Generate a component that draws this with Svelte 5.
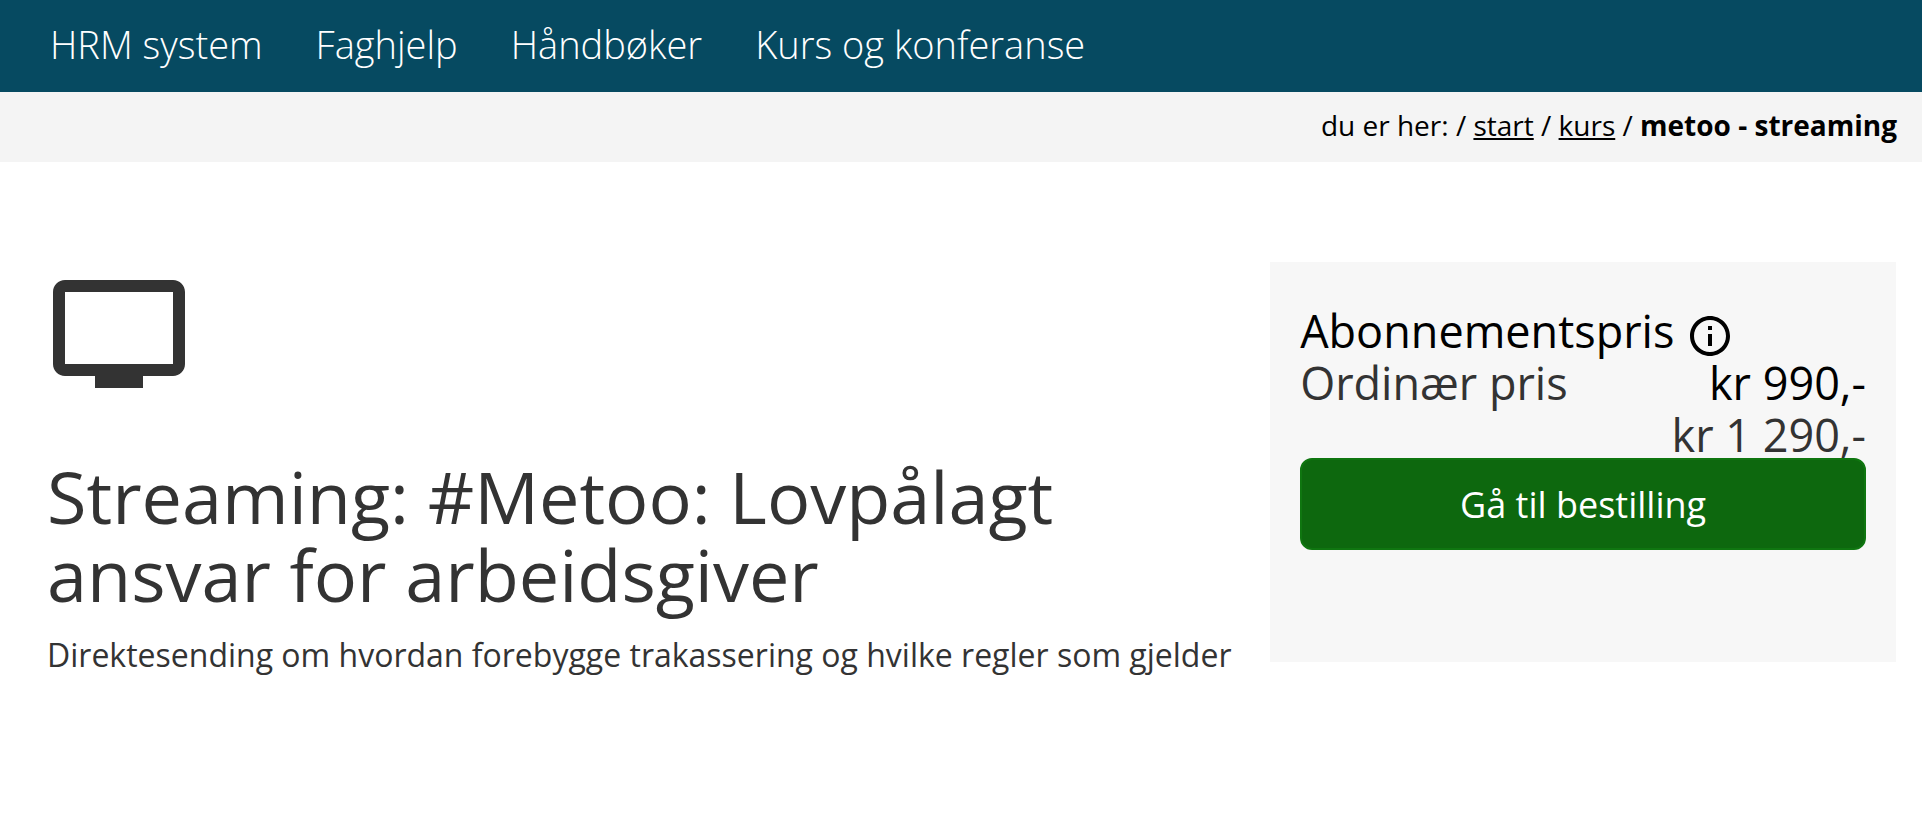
<script lang="ts">
	const menu = ['HRM system', 'Faghjelp', 'Håndbøker', 'Kurs og konferanse'];
	const crumbs = ['start', 'kurs'];
</script>

<header>
	<nav class="menu" aria-label="Hovedmeny">
		{#each menu as item}
			<a href="/">{item}</a>
		{/each}
	</nav>
</header>

<nav class="crumbs" aria-label="Brødsmuler">
	du er her: /
	{#each crumbs as crumb}
		<a href="/{crumb}">{crumb}</a> /{' '}
	{/each}
	<strong>metoo - streaming</strong>
</nav>

<main>
	<section>
		<svg class="tv" viewBox="0 0 24 24" aria-hidden="true">
			<path
				d="M21 3H3c-1.1 0-2 .9-2 2v12c0 1.1.9 2 2 2h5v2h8v-2h5c1.1 0 2-.9 2-2V5c0-1.1-.9-2-2-2zm0 14H3V5h18v12z"
			/>
		</svg>
		<h1>Streaming: #Metoo: Lovpålagt ansvar for arbeidsgiver</h1>
		<p>Direktesending om hvordan forebygge trakassering og hvilke regler som gjelder</p>
	</section>

	<aside>
		<dl>
			<dt class="member">
				Abonnementspris
				<svg viewBox="0 0 24 24" aria-hidden="true">
					<path
						d="M11 17h2v-6h-2v6zm1-15C6.48 2 2 6.48 2 12s4.48 10 10 10 10-4.48 10-10S17.52 2 12 2zm0 18c-4.41 0-8-3.59-8-8s3.59-8 8-8 8 3.59 8 8-3.59 8-8 8zM11 9h2V7h-2v2z"
					/>
				</svg>
			</dt>
			<dd class="member">kr 990,-</dd>
			<dt>Ordinær pris</dt>
			<dd>kr 1 290,-</dd>
		</dl>
		<button type="button">Gå til bestilling</button>
	</aside>
</main>

<style>
	:global(body) {
		background: #fff;
		color: #333;
		font-family: 'Open Sans', sans-serif;
	}

	header {
		padding: 17px 50px 21px;
		background: #064a61;
	}

	.menu {
		display: flex;
		flex-wrap: wrap;
		gap: 0 53px;

		a {
			color: #fff;
			font-size: 38px;
			font-weight: 300;
			line-height: 54px;
			text-decoration: none;
		}
	}

	.crumbs {
		padding: 13px 25px 17px;
		background: #f4f4f4;
		color: #000;
		font-size: 28px;
		line-height: 40px;
		text-align: right;

		a {
			color: inherit;
		}
	}

	main {
		display: grid;
		grid-template-columns: 19fr 10fr;
		gap: 34px;
		align-items: start;
		padding: 100px 26px 100px 47px;
	}

	svg {
		fill: currentColor;
	}

	.tv {
		display: block;
		width: 144px;
		height: 144px;
	}

	h1 {
		max-width: 1100px;
		margin: 51px 0 17px;
		font-size: 72px;
		font-weight: 400;
		line-height: 78px;
	}

	p {
		margin: 0;
		font-size: 32px;
		line-height: 50px;
	}

	aside {
		box-sizing: border-box;
		min-height: 400px;
		padding: 46px 30px;
		background: #f7f7f7;
	}

	/* the prices sit one row below their labels */
	dl {
		display: grid;
		grid-template-columns: auto auto;
		gap: 6px 0;
		margin: 0;
		font-size: 45px;
		line-height: 46px;
	}

	dt {
		grid-column: 1;
		grid-row: 2;

		&.member {
			display: flex;
			grid-column: 1 / 3;
			grid-row: 1;
			gap: 12px;
		}

		svg {
			width: 48px;
			height: 48px;
			margin: 4px 0 -6px;
		}
	}

	dd {
		grid-column: 2;
		grid-row: 3;
		margin: 0;
		text-align: right;

		&.member {
			grid-row: 2;
		}
	}

	.member {
		color: #000;
	}

	button {
		display: block;
		width: 100%;
		padding: 17px 16px 15px;
		border: 2px solid #0f7610;
		border-radius: 12px;
		background: #0d680e;
		color: #fff;
		font: 500 36px/56px 'Open Sans', sans-serif;
		cursor: pointer;
	}
</style>
